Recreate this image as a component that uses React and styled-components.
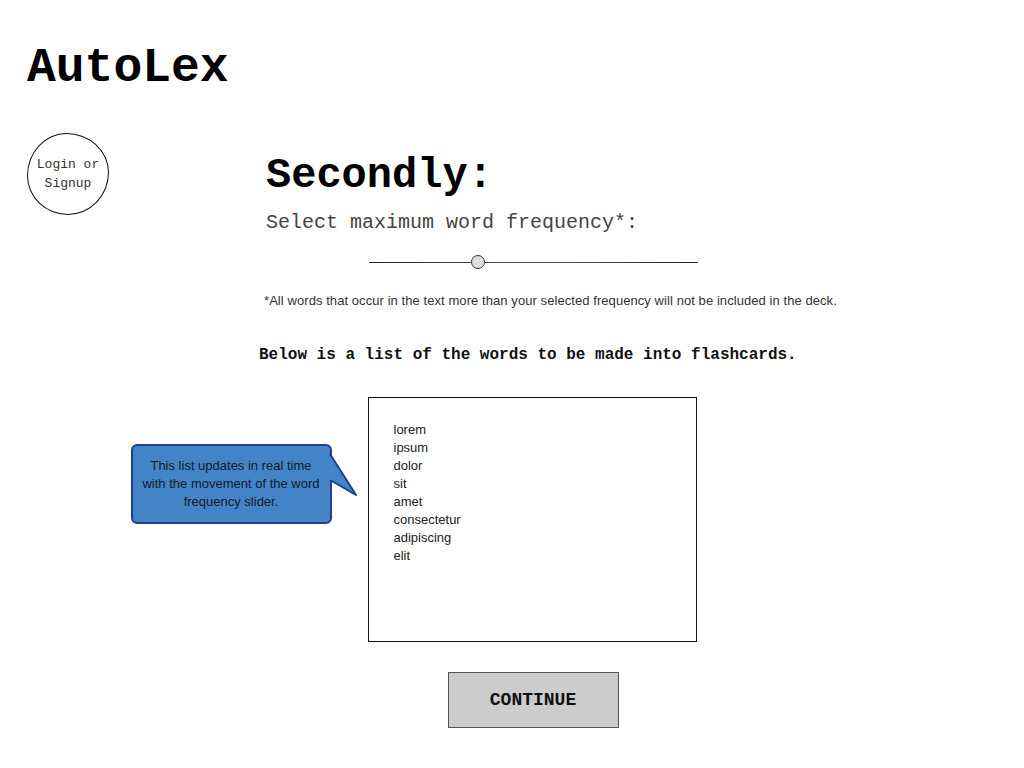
import React from 'react'
import styled, { createGlobalStyle } from 'styled-components'

const GlobalStyle = createGlobalStyle`
    html, body {
        margin: 0;
        padding: 0;
        background: #fff;
    }
    body {
        font-family: "Liberation Sans", Arial, sans-serif;
        color: #000;
    }
`

const mono = `"Liberation Mono", "Courier New", monospace`

const Page = styled.div`
    width: 1024px;
    height: 768px;
    overflow: hidden;
    position: relative;
`

const Title = styled.h1`
    margin: 0;
    padding: 44px 0 0 27px;
    font-family: ${mono};
    font-size: 48px;
    font-weight: 700;
    line-height: 48px;
`

const Body = styled.div`
    display: grid;
    grid-template-columns: 259px 548px;
    margin-top: 41px;
`

const Sidebar = styled.div`
    padding-left: 27px;
`

const LoginBubble = styled.div`
    width: 80px;
    height: 80px;
    border: 1px solid #111;
    border-radius: 48% 52% 50% 50% / 52% 48% 52% 48%;
    display: flex;
    align-items: center;
    justify-content: center;
    text-align: center;
    font-family: ${mono};
    font-size: 13px;
    line-height: 19px;
    color: #333;
`

const Main = styled.div`
    display: flex;
    flex-direction: column;
    padding-top: 22px;
`

const Heading = styled.h2`
    margin: 0 0 0 7px;
    font-family: ${mono};
    font-size: 42px;
    font-weight: 700;
    line-height: 42px;
`

const Prompt = styled.div`
    margin: 14px 0 0 7px;
    font-family: ${mono};
    font-size: 20px;
    line-height: 24px;
    color: #444;
`

const SliderTrack = styled.div`
    position: relative;
    align-self: center;
    width: 329px;
    height: 1px;
    margin-top: 27px;
    background: linear-gradient(90deg, #222, #555 50%, #222);
`

const SliderThumb = styled.div`
    position: absolute;
    top: -7px;
    width: 14px;
    height: 14px;
    margin-left: -7px;
    border-radius: 50%;
    border: 1px solid #333;
    background: #e0e0e0;
    box-sizing: border-box;
`

const Note = styled.div`
    margin: 30px 0 0 5px;
    font-size: 13px;
    line-height: 16px;
    letter-spacing: 0.07px;
    color: #333;
    white-space: nowrap;
`

const ListIntro = styled.div`
    margin-top: 36px;
    font-family: ${mono};
    font-size: 16px;
    font-weight: 700;
    line-height: 20px;
    white-space: nowrap;
    color: #111;
`

const ListArea = styled.div`
    position: relative;
    align-self: center;
    margin: 32px 0 0 -2px;
`

const WordBox = styled.ul`
    list-style: none;
    margin: 0;
    width: 329px;
    height: 245px;
    box-sizing: border-box;
    padding: 23px 0 0 25px;
    border: 1px solid #111;
    font-size: 13px;
    line-height: 18px;
    color: #222;
`

const Callout = styled.div`
    position: absolute;
    left: -237px;
    top: 47px;
    width: 201px;
    height: 80px;
    box-sizing: border-box;
    padding-top: 11px;
    border: 2px solid #213f8c;
    border-radius: 6px;
    background: #4384c9;
    font-size: 13px;
    line-height: 18px;
    text-align: center;
    color: #151a22;
`

const CalloutTail = styled.svg`
    position: absolute;
    left: 197px;
    top: 8px;
    overflow: visible;
`

const ContinueButton = styled.button`
    align-self: center;
    margin-top: 30px;
    width: 171px;
    height: 56px;
    border: 1px solid #555;
    background: #cccccc;
    font-family: ${mono};
    font-size: 18px;
    font-weight: 700;
    color: #111;
    cursor: pointer;
`

const words = ['lorem', 'ipsum', 'dolor', 'sit', 'amet', 'consectetur', 'adipiscing', 'elit']

export default function App() {
    const frequency = 0.334
    return (
        <Page>
            <GlobalStyle />
            <Title>AutoLex</Title>
            <Body>
                <Sidebar>
                    <LoginBubble>Login or<br />Signup</LoginBubble>
                </Sidebar>
                <Main>
                    <Heading>Secondly:</Heading>
                    <Prompt>Select maximum word frequency*:</Prompt>
                    <SliderTrack>
                        <SliderThumb style={{ left: `${frequency * 100}%` }} />
                    </SliderTrack>
                    <Note>*All words that occur in the text more than your selected frequency will not be included in the deck.</Note>
                    <ListIntro>Below is a list of the words to be made into flashcards.</ListIntro>
                    <ListArea>
                        <WordBox>
                            {words.map(w => <li key={w}>{w}</li>)}
                        </WordBox>
                        <Callout>
                            This list updates in real time<br />
                            with the movement of the word<br />
                            frequency slider.
                            <CalloutTail width="30" height="45">
                                <path d="M0 0 L26 41 L0 26 Z" fill="#4384c9" />
                                <path d="M0 0 L26 41 L0 26" fill="none" stroke="#213f8c" strokeWidth="2" strokeLinejoin="round" />
                            </CalloutTail>
                        </Callout>
                    </ListArea>
                    <ContinueButton>CONTINUE</ContinueButton>
                </Main>
            </Body>
        </Page>
    )
}
